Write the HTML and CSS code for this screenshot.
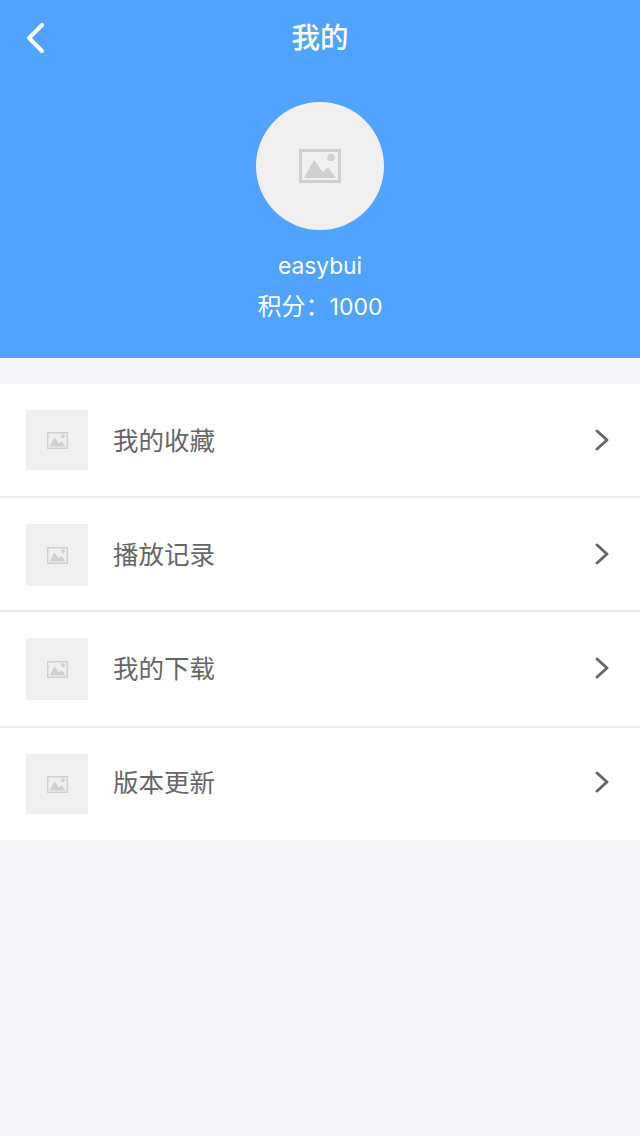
FILE: index.html
```html
<!DOCTYPE html>
<html lang="zh-CN">
<head>
<meta charset="utf-8">
<title>我的</title>
<link rel="stylesheet" href="styles.css">
</head>
<body>
<header class="hero">
  <div class="nav">
    <svg class="back" width="24" height="34" viewBox="0 0 24 34"><path d="M18 4 L5 17 L18 30" fill="none" stroke="#fff" stroke-width="4" stroke-linecap="round" stroke-linejoin="round"/></svg>
    <h1 class="title">我的</h1>
  </div>
  <div class="avatar">
    <svg width="42" height="34" viewBox="0 0 42 34"><use href="#ph"/></svg>
  </div>
  <div class="name">easybui</div>
  <div class="score">积分：<span class="num">1000</span></div>
</header>
<svg class="defs" width="0" height="0">
  <symbol id="ph" viewBox="0 0 42 34">
    <path fill-rule="evenodd" d="M0 0H42V34H0ZM3 3V31H39V3Z" fill="#cfcfcf"/>
    <circle cx="32" cy="8.5" r="3.8" fill="#cfcfcf"/>
    <path d="M5 29 L15 11 L24 23 L29 18 L37 29 Z" fill="#cfcfcf"/>
  </symbol>
  <symbol id="chev" viewBox="0 0 16 24">
    <path d="M3 3 L13 12 L3 21" fill="none" stroke="#666" stroke-width="3" stroke-linecap="round" stroke-linejoin="round"/>
  </symbol>
</svg>
<ul class="list">
  <li class="row">
    <div class="thumb"><svg width="21" height="17"><use href="#ph"/></svg></div>
    <span class="label">我的收藏</span>
    <svg class="arrow" width="16" height="24"><use href="#chev"/></svg>
  </li>
  <li class="row row-b">
    <div class="thumb"><svg width="21" height="17"><use href="#ph"/></svg></div>
    <span class="label">播放记录</span>
    <svg class="arrow" width="16" height="24"><use href="#chev"/></svg>
  </li>
  <li class="row row-c">
    <div class="thumb"><svg width="21" height="17"><use href="#ph"/></svg></div>
    <span class="label">我的下载</span>
    <svg class="arrow" width="16" height="24"><use href="#chev"/></svg>
  </li>
  <li class="row row-d">
    <div class="thumb"><svg width="21" height="17"><use href="#ph"/></svg></div>
    <span class="label">版本更新</span>
    <svg class="arrow" width="16" height="24"><use href="#chev"/></svg>
  </li>
</ul>
</body>
</html>
```
FILE: styles.css
```css
* { box-sizing: border-box; margin: 0; padding: 0; }
html, body { height: 100%; }
body {
  background: #f3f5f9;
  font-family: Inter, "Noto Sans CJK SC", "Liberation Sans", sans-serif;
}
.hero {
  background: #50a4ff;
  height: 358px;
  color: #fff;
  display: flex;
  flex-direction: column;
  align-items: center;
}
.nav {
  width: 100%;
  height: 76px;
  display: flex;
  align-items: center;
  justify-content: center;
  position: relative;
  margin-bottom: 26px;
}
.back { position: absolute; left: 24px; top: 21px; }
.title { font-size: 28.5px; font-weight: 500; line-height: 76px; }
.avatar {
  width: 128px;
  height: 128px;
  border-radius: 50%;
  background: #f0f0f0;
  display: flex;
  align-items: center;
  justify-content: center;
}
.name { font-size: 22.8px; line-height: 40px; margin-top: 16px; }
.score { font-size: 24px; line-height: 40px; margin-top: 1px; }
.num { font-size: 23px; }
.defs { position: absolute; }
.list { list-style: none; background: #fff; margin-top: 26px; }
.row {
  display: flex;
  align-items: center;
  height: 114px;
  padding: 0 30px 0 26px;
  border-bottom: 2px solid #eaeaea;
}
.row-b .thumb { height: 62px; margin-top: 2px; }
.row-c { height: 116px; padding-bottom: 2px; }
.row-c .thumb { height: 62px; margin-top: 2px; }
.row-d { height: 112px; padding-bottom: 4px; border-bottom: 0; }
.row-d .thumb { margin-top: 4px; }
.thumb {
  width: 62px;
  height: 60px;
  background: #f0f0f0;
  display: flex;
  align-items: center;
  justify-content: center;
}
.label {
  flex: 1;
  margin-left: 25px;
  padding-top: 2px;
  font-size: 25.5px;
  line-height: 40px;
  color: #666;
}
.arrow { display: block; }
```
